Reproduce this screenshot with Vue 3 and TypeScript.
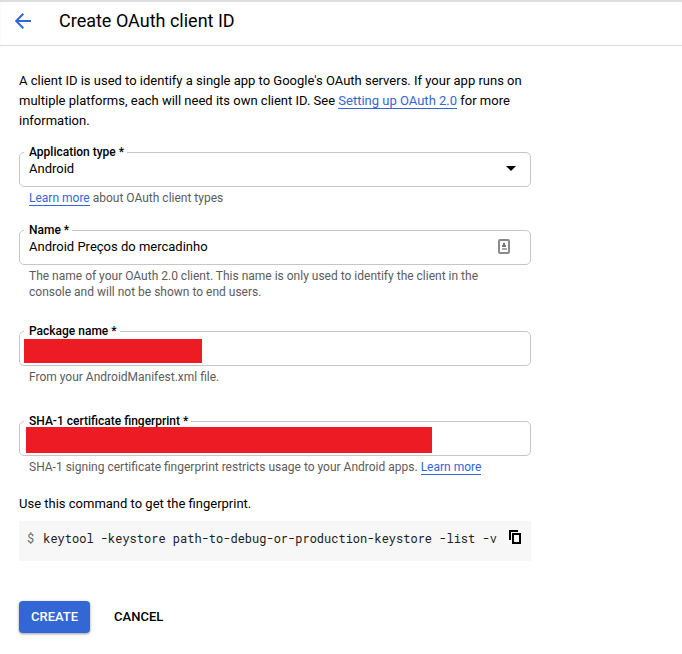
<script setup lang="ts">
import { ref } from 'vue'

const applicationType = ref('Android')
const name = ref('Android Preços do mercadinho')
const packageName = ref('')
const fingerprint = ref('')
const command = 'keytool -keystore path-to-debug-or-production-keystore -list -v'

function copyCommand(): void {
  navigator.clipboard?.writeText(command)
}
</script>

<template>
  <div class="page">
    <header class="header">
      <button class="back" type="button" aria-label="Back">
        <svg width="16" height="16" viewBox="0 0 16 16" fill="none" stroke="currentColor" stroke-width="2">
          <path d="M16 8H1.5M8.3 .8 1.2 8l7.1 7.2" />
        </svg>
      </button>
      <h1>Create OAuth client ID</h1>
    </header>

    <main>
      <form class="form" @submit.prevent>
        <p class="intro">
          A client ID is used to identify a single app to Google's OAuth servers. If your app runs on
          multiple platforms, each will need its own client ID. See
          <a href="#">Setting up OAuth 2.0</a> for more information.
        </p>

        <div class="field type-field">
          <fieldset>
            <legend><label for="type">Application type *</label></legend>
            <select id="type" v-model="applicationType">
              <option>Android</option>
            </select>
          </fieldset>
          <svg class="caret" width="10" height="5" viewBox="0 0 10 5"><path d="M0 0h10L5 5z" /></svg>
          <p class="hint"><a href="#">Learn more</a> about OAuth client types</p>
        </div>

        <div class="field name-field">
          <fieldset>
            <legend><label for="name">Name *</label></legend>
            <input id="name" v-model="name" type="text" />
          </fieldset>
          <svg class="contact" width="12" height="16" viewBox="0 0 12 16">
            <rect x="1" y="1" width="10" height="13" rx="1" fill="#fff" stroke="#8b8b8b" stroke-width="2" />
            <path d="M5 4h2v2h1v2H4V6h1z" fill="#777" />
            <path d="M4 9h5v2H4z" fill="#aaa" />
          </svg>
          <p class="hint">
            The name of your OAuth 2.0 client. This name is only used to identify the client in the
            console and will not be shown to end users.
          </p>
        </div>

        <div class="field package-field">
          <fieldset>
            <legend><label for="package">Package name *</label></legend>
            <input id="package" v-model="packageName" type="text" />
          </fieldset>
          <span class="mask mask-package"></span>
          <p class="hint">From your AndroidManifest.xml file.</p>
        </div>

        <div class="field">
          <fieldset>
            <legend><label for="sha">SHA-1 certificate fingerprint *</label></legend>
            <input id="sha" v-model="fingerprint" type="text" />
          </fieldset>
          <span class="mask mask-sha"></span>
          <p class="hint">
            SHA-1 signing certificate fingerprint restricts usage to your Android apps.
            <a href="#">Learn more</a>
          </p>
        </div>

        <p class="command-title">Use this command to get the fingerprint.</p>
        <div class="command">
          <code><span class="prompt">$</span>{{ command }}</code>
          <button class="copy" type="button" aria-label="Copy command" @click="copyCommand">
            <svg width="12" height="14" viewBox="0 0 12 14" fill="none" stroke="#000" stroke-width="2">
              <path d="M1 10V1h8" />
              <path d="M4 4h7v9H4z" />
            </svg>
          </button>
        </div>

        <div class="actions">
          <button class="create" type="submit">CREATE</button>
          <button class="cancel" type="button">CANCEL</button>
        </div>
      </form>
    </main>
  </div>
</template>

<style>
body {
  margin: 0;
  background: #fff;
}
</style>

<style scoped>
.page {
  font-family: Roboto, "Liberation Sans", sans-serif;
  font-size: 13px;
  line-height: 20px;
  color: #000;
}

button {
  font: inherit;
  border: 0;
  background: none;
  cursor: pointer;
}

.header {
  box-sizing: border-box;
  height: 46px;
  display: flex;
  align-items: center;
  gap: 28px;
  padding: 0 15px 4px;
  border-bottom: 1px solid #dadada;
  box-shadow: inset 0 2px 1px #dcdcdc;
}

.back {
  display: flex;
  padding: 0;
  color: #3367d6;
}

h1 {
  margin: 0;
  font-size: 18px;
  font-weight: 400;
  line-height: 24px;
}

main {
  padding: 25px 19px 21px;
}

.form {
  max-width: 512px;
}

p {
  margin: 0;
}

a {
  color: #3367d6;
  text-decoration: none;
  border-bottom: 1px solid #3367d6;
}

.intro {
  margin-bottom: 13px;
}

.field {
  position: relative;
  margin-bottom: 19px;
}

.type-field {
  margin-bottom: 16px;
}

.name-field {
  margin-bottom: 23px;
}

.package-field {
  margin-bottom: 28px;
}

fieldset {
  min-width: 0;
  margin: 0;
  padding: 0 4px 8px;
  border: 1px solid #c6c6c6;
  border-radius: 5px;
}

legend {
  padding: 0 3px 0 5px;
  font-size: 12px;
  font-weight: 500;
  line-height: 16px;
}

legend label {
  display: block;
}

input,
select {
  display: block;
  box-sizing: border-box;
  width: 100%;
  height: 18px;
  margin: 0;
  padding: 0 5px;
  border: 0;
  outline: 0;
  appearance: none;
  background: transparent;
  color: #000;
  font: inherit;
  line-height: 18px;
}

.caret {
  position: absolute;
  top: 22px;
  right: 15px;
  pointer-events: none;
}

.contact {
  position: absolute;
  top: 17px;
  right: 21px;
}

.hint {
  margin: 3px 10px 0;
  font-size: 12px;
  line-height: 16px;
  color: #5c5c5c;
}

.mask {
  position: absolute;
  background: #ed1c24;
}

.mask-package {
  top: 16px;
  left: 5px;
  width: 178px;
  height: 24px;
}

.mask-sha {
  top: 14px;
  left: 7px;
  width: 406px;
  height: 26px;
}

.command-title {
  margin-bottom: 7px;
}

.command {
  display: flex;
  align-items: flex-start;
  justify-content: space-between;
  padding: 7px 10px 13px 8px;
  background: #f7f7f7;
}

code {
  font-family: "Roboto Mono", "DejaVu Sans Mono", monospace;
  font-size: 12px;
  line-height: 20px;
  white-space: nowrap;
  color: #212121;
}

.prompt {
  margin-right: 9px;
  color: #666;
}

.copy {
  display: flex;
  padding: 2px 0;
}

.actions {
  display: flex;
  gap: 12px;
  margin-top: 40px;
}

.actions button {
  height: 32px;
  padding: 0 12px;
  border-radius: 4px;
  font-weight: 500;
}

.actions .create {
  background: #3367d6;
  color: #fff;
  box-shadow: 0 1px 3px #00000066;
}
</style>
